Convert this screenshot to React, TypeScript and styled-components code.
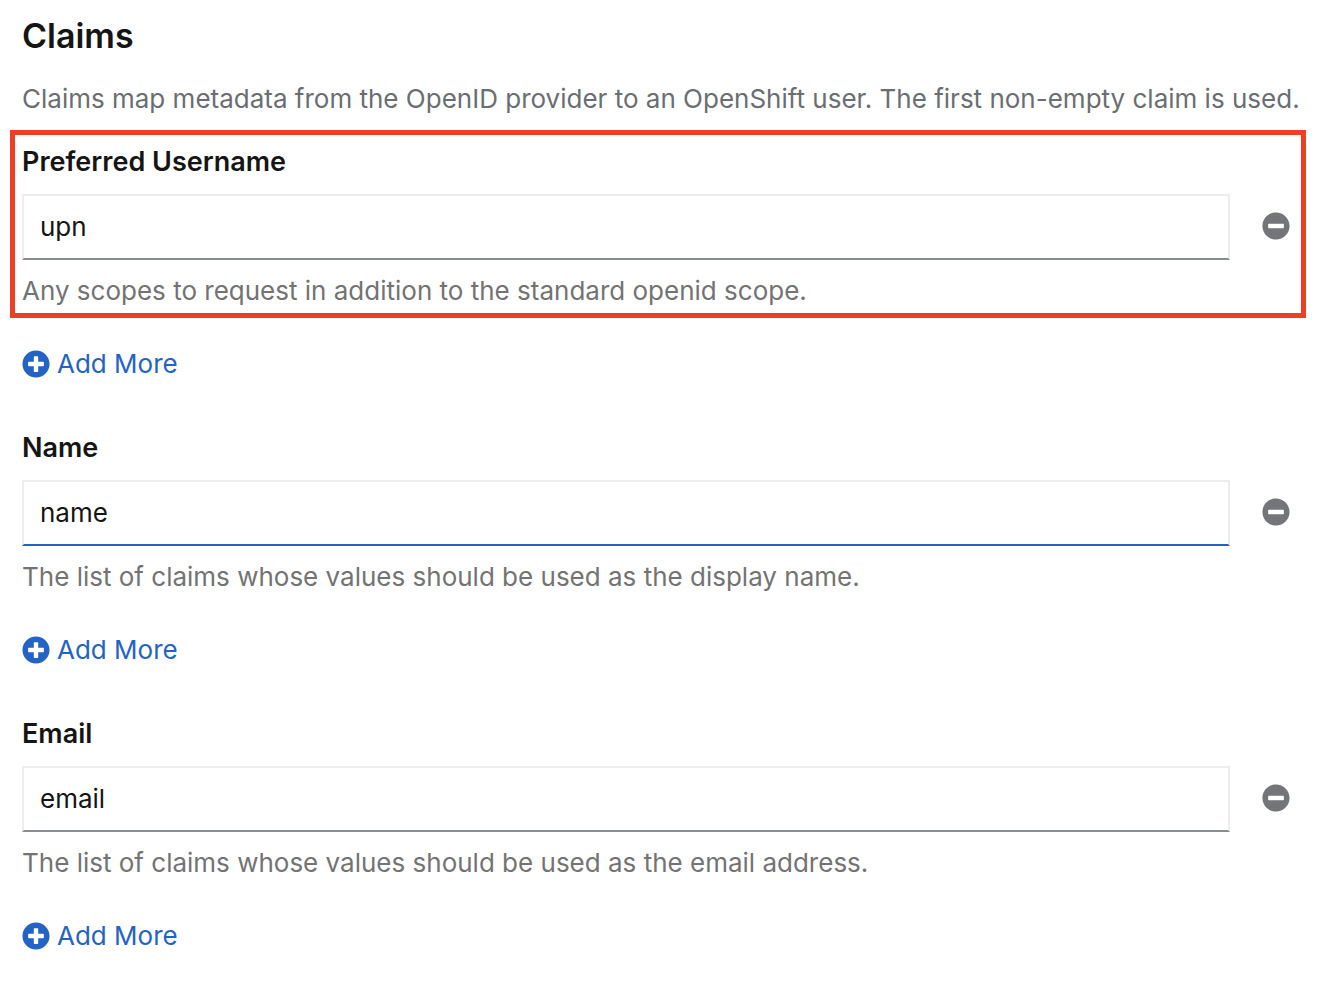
import React, { useId, useState } from "react";
import styled, { createGlobalStyle, css } from "styled-components";
import { FaMinusCircle, FaPlusCircle } from "react-icons/fa";

const GlobalStyle = createGlobalStyle`
  * { box-sizing: border-box; }
  body {
    margin: 0;
    background: #ffffff;
    color: #151515;
    font-family: Inter, "Liberation Sans", sans-serif;
    font-size: 26px;
    line-height: 42px;
  }
`;

const Page = styled.main`
  padding: 12px 0 26px 22px;
`;

const Title = styled.h1`
  margin: 0;
  font-size: 34px;
  font-weight: 600;
  line-height: 48px;
`;

const Description = styled.p`
  margin: 18px 0 21px;
  color: #6a6e73;
`;

const ClaimsForm = styled.form`
  display: flex;
  flex-direction: column;
  gap: 42px;
  padding-right: 24px;
`;

const ClaimGroup = styled.section`
  display: flex;
  flex-direction: column;
  align-items: flex-start;
  gap: 31px;
`;

const Field = styled.div<{ $highlighted?: boolean }>`
  position: relative;
  width: 100%;

  ${({ $highlighted }) =>
    $highlighted &&
    css`
      &::after {
        content: "";
        position: absolute;
        inset: -11px 0 -6px -12px;
        border: 5px solid #ee3f24;
        pointer-events: none;
      }
    `}
`;

const Label = styled.label`
  display: block;
  font-size: 27px;
  font-weight: 600;
`;

const InputRow = styled.div`
  display: flex;
  align-items: center;
  gap: 16px;
  margin: 11px 0 10px;
`;

const TextInput = styled.input<{ $active?: boolean }>`
  flex: 1;
  min-width: 0;
  height: 66px;
  padding: 0 16px 2px;
  border: 2px solid #ededed;
  border-bottom-color: ${({ $active }) => ($active ? "#2463c4" : "#8a8d90")};
  border-radius: 0;
  background: #ffffff;
  color: inherit;
  font: inherit;
  outline: none;
`;

const PlainButton = styled.button`
  display: flex;
  align-items: center;
  border: 0;
  background: none;
  font: inherit;
  cursor: pointer;

  svg {
    width: 28px;
    height: 28px;
    flex: none;
  }
`;

const RemoveButton = styled(PlainButton)`
  padding: 16px 16px 18px;
  color: #737579;
`;

const AddButton = styled(PlainButton)`
  gap: 7px;
  padding: 0;
  color: #2463c4;
`;

const HelperText = styled.p`
  margin: 0;
  color: #737373;
`;

type Claim = {
  label: string;
  value: string;
  help: string;
  highlighted?: boolean;
  active?: boolean;
};

const claims: Claim[] = [
  {
    label: "Preferred Username",
    value: "upn",
    help: "Any scopes to request in addition to the standard openid scope.",
    highlighted: true,
  },
  {
    label: "Name",
    value: "name",
    help: "The list of claims whose values should be used as the display name.",
    active: true,
  },
  {
    label: "Email",
    value: "email",
    help: "The list of claims whose values should be used as the email address.",
  },
];

function ClaimField({ label, value, help, highlighted, active }: Claim) {
  const id = useId();
  const [text, setText] = useState(value);

  return (
    <ClaimGroup>
      <Field $highlighted={highlighted}>
        <Label htmlFor={id}>{label}</Label>
        <InputRow>
          <TextInput
            id={id}
            type="text"
            value={text}
            onChange={(event) => setText(event.target.value)}
            aria-describedby={`${id}-help`}
            $active={active}
          />
          <RemoveButton type="button" aria-label={`Remove ${label}`} onClick={() => setText("")}>
            <FaMinusCircle aria-hidden />
          </RemoveButton>
        </InputRow>
        <HelperText id={`${id}-help`}>{help}</HelperText>
      </Field>
      <AddButton type="button">
        <FaPlusCircle aria-hidden />
        Add More
      </AddButton>
    </ClaimGroup>
  );
}

export default function App() {
  return (
    <>
      <GlobalStyle />
      <Page>
        <Title>Claims</Title>
        <Description>
          Claims map metadata from the OpenID provider to an OpenShift user. The first non-empty claim is used.
        </Description>
        <ClaimsForm>
          {claims.map((claim) => (
            <ClaimField key={claim.label} {...claim} />
          ))}
        </ClaimsForm>
      </Page>
    </>
  );
}
